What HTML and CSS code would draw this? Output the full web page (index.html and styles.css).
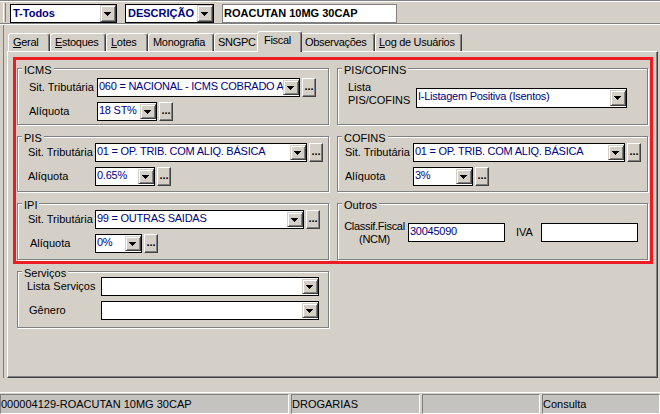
FILE: index.html
```html
<!DOCTYPE html>
<html lang="pt-BR">
<head>
<meta charset="utf-8">
<title>Produto - Fiscal</title>
<link rel="stylesheet" href="styles.css">
</head>
<body>
<div class="toolbar">
  <span class="grip"></span>
  <div class="combo tb-combo tb-filter"><span class="val">T-Todos</span><span class="ddbtn"><svg class="arw" width="7" height="4" viewBox="0 0 7 4"><path d="M0 0H7V1H6V2H5V3H4V4H3V3H2V2H1V1H0Z"/></svg></span></div>
  <div class="combo tb-combo tb-field"><span class="val">DESCRIÇÃO</span><span class="ddbtn"><svg class="arw" width="7" height="4" viewBox="0 0 7 4"><path d="M0 0H7V1H6V2H5V3H4V4H3V3H2V2H1V1H0Z"/></svg></span></div>
  <div class="search">ROACUTAN 10MG 30CAP</div>
</div>

<div class="workspace">
  <div class="tabs">
    <div class="tab t-geral"><u>G</u>eral</div>
    <div class="tab t-estoques"><u>E</u>stoques</div>
    <div class="tab t-lotes"><u>L</u>otes</div>
    <div class="tab t-mono">Monografia</div>
    <div class="tab t-sngpc">SNGPC</div>
    <div class="tab t-fiscal active">Fiscal</div>
    <div class="tab t-obs">Observações</div>
    <div class="tab t-log"><u>L</u>og de Usuários</div>
  </div>

  <div class="page">
    <div class="highlight">
      <div class="tax-grid">
        <section class="group g-icms">
          <span class="legend">ICMS</span>
          <div class="fields">
            <div class="row"><span class="lbl lw68">Sit. Tributária</span><div class="combo w203"><span class="val">060 = NACIONAL - ICMS COBRADO AN</span><span class="ddbtn"><svg class="arw" width="7" height="4" viewBox="0 0 7 4"><path d="M0 0H7V1H6V2H5V3H4V4H3V3H2V2H1V1H0Z"/></svg></span></div><span class="more">...</span></div>
            <div class="row"><span class="lbl lw68">Alíquota</span><div class="combo w60"><span class="val">18 ST%</span><span class="ddbtn"><svg class="arw" width="7" height="4" viewBox="0 0 7 4"><path d="M0 0H7V1H6V2H5V3H4V4H3V3H2V2H1V1H0Z"/></svg></span></div><span class="more">...</span></div>
          </div>
        </section>

        <section class="group g-piscof">
          <span class="legend">PIS/COFINS</span>
          <div class="row-top">
            <span class="lbl lw68">Lista<br>PIS/COFINS</span>
            <div class="combo w211 tall"><span class="val">I-Listagem Positiva (Isentos)</span><span class="ddbtn"><svg class="arw" width="7" height="4" viewBox="0 0 7 4"><path d="M0 0H7V1H6V2H5V3H4V4H3V3H2V2H1V1H0Z"/></svg></span></div>
          </div>
        </section>

        <section class="group g-pis">
          <span class="legend">PIS</span>
          <div class="fields">
            <div class="row"><span class="lbl lw67">Sit. Tributária</span><div class="combo w212"><span class="val">01 = OP. TRIB. COM ALIQ. BÁSICA</span><span class="ddbtn"><svg class="arw" width="7" height="4" viewBox="0 0 7 4"><path d="M0 0H7V1H6V2H5V3H4V4H3V3H2V2H1V1H0Z"/></svg></span></div><span class="more">...</span></div>
            <div class="row"><span class="lbl lw67">Alíquota</span><div class="combo w60"><span class="val">0.65%</span><span class="ddbtn"><svg class="arw" width="7" height="4" viewBox="0 0 7 4"><path d="M0 0H7V1H6V2H5V3H4V4H3V3H2V2H1V1H0Z"/></svg></span></div><span class="more">...</span></div>
          </div>
        </section>

        <section class="group g-cofins">
          <span class="legend">COFINS</span>
          <div class="fields">
            <div class="row"><span class="lbl lw68">Sit. Tributária</span><div class="combo w212"><span class="val">01 = OP. TRIB. COM ALIQ. BÁSICA</span><span class="ddbtn"><svg class="arw" width="7" height="4" viewBox="0 0 7 4"><path d="M0 0H7V1H6V2H5V3H4V4H3V3H2V2H1V1H0Z"/></svg></span></div><span class="more">...</span></div>
            <div class="row"><span class="lbl lw68">Alíquota</span><div class="combo w60"><span class="val">3%</span><span class="ddbtn"><svg class="arw" width="7" height="4" viewBox="0 0 7 4"><path d="M0 0H7V1H6V2H5V3H4V4H3V3H2V2H1V1H0Z"/></svg></span></div><span class="more">...</span></div>
          </div>
        </section>

        <section class="group g-ipi">
          <span class="legend">IPI</span>
          <div class="fields">
            <div class="row"><span class="lbl lw67">Sit. Tributária</span><div class="combo w209"><span class="val">99 = OUTRAS SAIDAS</span><span class="ddbtn"><svg class="arw" width="7" height="4" viewBox="0 0 7 4"><path d="M0 0H7V1H6V2H5V3H4V4H3V3H2V2H1V1H0Z"/></svg></span></div><span class="more">...</span></div>
            <div class="row"><span class="lbl lw67 indent">Alíquota</span><div class="combo w47"><span class="val">0%</span><span class="ddbtn"><svg class="arw" width="7" height="4" viewBox="0 0 7 4"><path d="M0 0H7V1H6V2H5V3H4V4H3V3H2V2H1V1H0Z"/></svg></span></div><span class="more">...</span></div>
          </div>
        </section>

        <section class="group g-outros">
          <span class="legend">Outros</span>
          <div class="row-mid">
            <span class="lbl lbl-ncm">Classif.Fiscal<br>(NCM)</span>
            <div class="edit w97">30045090</div>
            <span class="lbl lbl-iva">IVA</span>
            <div class="edit w97"></div>
          </div>
        </section>
      </div>
    </div>

    <section class="group g-serv">
      <span class="legend">Serviços</span>
      <div class="fields">
        <div class="row"><span class="lbl lw74">Lista Serviços</span><div class="combo w218"><span class="val"></span><span class="ddbtn"><svg class="arw" width="7" height="4" viewBox="0 0 7 4"><path d="M0 0H7V1H6V2H5V3H4V4H3V3H2V2H1V1H0Z"/></svg></span></div></div>
        <div class="row"><span class="lbl lw74 indent">Gênero</span><div class="combo w218"><span class="val"></span><span class="ddbtn"><svg class="arw" width="7" height="4" viewBox="0 0 7 4"><path d="M0 0H7V1H6V2H5V3H4V4H3V3H2V2H1V1H0Z"/></svg></span></div></div>
      </div>
    </section>
  </div>
</div>

<div class="statusbar">
  <div class="sb-panel sb-1">000004129-ROACUTAN 10MG 30CAP</div>
  <div class="sb-panel sb-2">DROGARIAS</div>
  <div class="sb-panel sb-3"></div>
  <div class="sb-panel sb-4">Consulta</div>
</div>
</body>
</html>
```
FILE: styles.css
```css
* { box-sizing: border-box; }

html, body { margin: 0; padding: 0; }

body {
  width: 660px;
  height: 414px;
  overflow: hidden;
  background: #d4d0c8;
  color: #000;
  font-family: "Liberation Sans", Arial, sans-serif;
  font-size: 11px;
  line-height: 13px;
}

/* ---------- toolbar ---------- */
.toolbar {
  height: 25px;
  display: flex;
  align-items: flex-start;
  padding: 3px 0 0 3px;
  border-top: 1px solid #808080;
  border-bottom: 1px solid #fff;
  box-shadow: inset 0 1px #fff, inset 0 -1px #808080;
}

.grip {
  width: 3px;
  height: 19px;
  margin-top: -1px;
  margin-right: 4px;
  border-left: 1px solid #fff;
  border-right: 1px solid #808080;
}

.combo {
  display: flex;
  height: 19px;
  border: 1px solid #000;
  background: #fff;
  color: #000080;
  flex: none;
}

.combo .val {
  flex: 1;
  min-width: 0;
  overflow: hidden;
  white-space: nowrap;
  line-height: 15px;
  padding-left: 1px;
  letter-spacing: -0.25px;
}

.ddbtn {
  flex: none;
  width: 16px;
  margin: 1px 0;
  display: flex;
  align-items: center;
  justify-content: center;
  padding-right: 1px;
  background: #d4d0c8;
  border: 1px solid;
  border-color: #d4d0c8 #404040 #404040 #d4d0c8;
  box-shadow: inset 1px 1px #fff, inset -1px -1px #808080;
}

.arw { display: block; shape-rendering: crispEdges; fill: #000; }

.tb-combo .val { font-weight: bold; line-height: 16px; padding-left: 2px; letter-spacing: 0; }
.tb-combo .ddbtn { margin: 0; }
.tb-filter { width: 107px; }
.tb-field { width: 89px; margin-left: 8px; }

.search {
  width: 175px;
  height: 19px;
  margin-left: 8px;
  padding-left: 1px;
  border: 1px solid #808080;
  background: #fff;
  font-weight: bold;
  line-height: 16px;
  white-space: nowrap;
}

/* ---------- tabs ---------- */
.workspace {
  margin-left: 3px;
  padding-left: 3px;
  border-left: 1px solid #808080;
}

.tabs {
  height: 26px;
  display: flex;
  align-items: flex-end;
  padding-left: 1px;
}

.tab {
  flex: none;
  height: 18px;
  padding: 2px 0 0 4px;
  border: 1px solid #fff;
  border-right-color: #404040;
  border-bottom: none;
  border-radius: 3px 3px 0 0;
  box-shadow: inset -1px 0 #808080;
  white-space: nowrap;
  line-height: 13px;
  letter-spacing: -0.3px;
}

.tab.active {
  height: 21px;
  margin: 0 -2px -1px;
  padding-left: 6px;
  position: relative;
  z-index: 1;
  background: #d4d0c8;
}

.t-geral { width: 42px; }
.t-estoques { width: 56px; }
.t-lotes { width: 42px; }
.t-mono { width: 66px; }
.t-sngpc { width: 45px; padding-left: 3px; }
.t-fiscal { width: 45px; }
.t-obs { width: 75px; }
.t-log { width: 87px; padding-left: 3px; }

/* ---------- page ---------- */
.page {
  width: 651px;
  height: 327px;
  padding: 5px 0 0 5px;
  border: 1px solid #fff;
  border-right-color: #404040;
  border-bottom-color: #404040;
  box-shadow: inset -1px -1px #808080;
}

.highlight {
  width: 640px;
  border: 3px solid #ed1c24;
  padding: 8px 2px 1px 1px;
}

.tax-grid {
  display: grid;
  grid-template-columns: 312px 311px;
  grid-template-rows: 57px 56px 57px;
  column-gap: 8px;
  row-gap: 11px;
}

.group {
  position: relative;
  border: 1px solid #808080;
  box-shadow: inset 1px 1px #fff, 1px 1px #fff;
}

.legend {
  position: absolute;
  top: -5px;
  left: 4px;
  padding: 0 2px;
  background: #d4d0c8;
  line-height: 13px;
  white-space: nowrap;
}

.fields {
  display: flex;
  flex-direction: column;
  gap: 5px;
}

.row {
  display: flex;
  align-items: center;
  height: 19px;
}

.lbl { flex: none; white-space: nowrap; line-height: 13px; }
.lw67 { width: 67px; }
.lw68 { width: 68px; }
.lw74 { width: 74px; }
.indent { padding-left: 2px; }

.w47 { width: 47px; }
.w60 { width: 60px; }
.w97 { width: 97px; }
.w203 { width: 203px; }
.w209 { width: 209px; }
.w211 { width: 211px; }
.w212 { width: 212px; }
.w218 { width: 218px; }

.combo.tall { height: 20px; margin-top: 7px; }

.more {
  flex: none;
  width: 14px;
  height: 19px;
  margin-left: 2px;
  border: 1px solid;
  border-color: #fff #404040 #404040 #fff;
  box-shadow: inset -1px -1px #808080;
  font-weight: bold;
  text-align: center;
  line-height: 14px;
  color: #000;
}

.g-icms { padding: 9px 0 0 11px; }
.g-pis { padding: 6px 0 0 10px; }
.g-ipi { padding: 6px 0 0 10px; }
.g-cofins { padding: 6px 0 0 7px; }
.g-piscof { padding: 12px 0 0 10px; }
.g-outros { padding: 15px 0 0 6px; }

.row-top { display: flex; align-items: flex-start; }

.row-mid {
  display: flex;
  align-items: center;
  height: 27px;
}

.lbl-ncm { width: 64px; text-align: center; letter-spacing: -0.3px; padding-right: 3px; }
.lbl-iva { width: 25px; margin-left: 11px; }

.edit {
  flex: none;
  height: 19px;
  border: 1px solid #000;
  background: #fff;
  color: #000080;
  line-height: 15px;
  padding-left: 1px;
  letter-spacing: -0.25px;
}

.g-serv {
  width: 312px;
  height: 57px;
  margin: 7px 0 0 4px;
  padding: 5px 0 0 9px;
}

/* ---------- status bar ---------- */
.statusbar {
  display: flex;
  gap: 2px;
  height: 26px;
  margin-top: 14px;
  padding-top: 1px;
  border-top: 1px solid #fff;
}

.sb-panel {
  flex: none;
  height: 20px;
  padding-top: 1px;
  border: 1px solid;
  border-color: #808080 #fff #fff #808080;
  background: #c4c3c0;
  line-height: 17px;
  white-space: nowrap;
  overflow: hidden;
}

.sb-1 { width: 289px; }
.sb-2 { width: 129px; }
.sb-3 { width: 118px; }
.sb-4 { flex: 1; }
```
